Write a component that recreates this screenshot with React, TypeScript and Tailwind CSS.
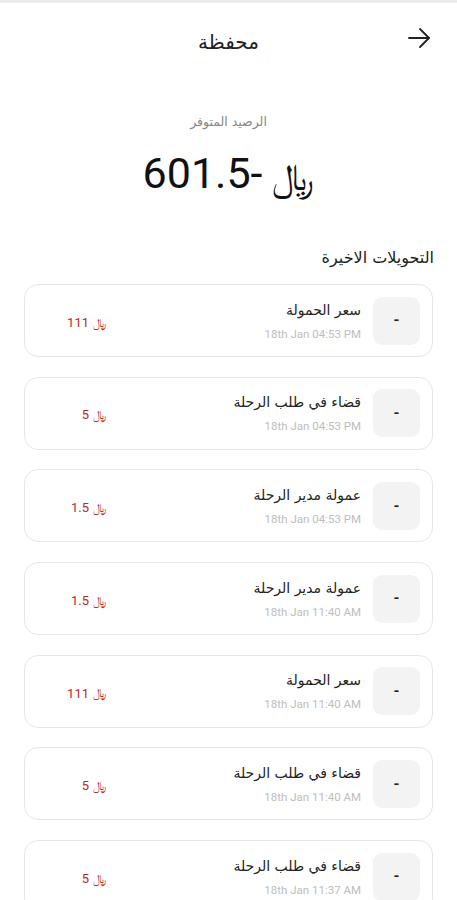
import React from "react";

const items = [
  { title: "سعر الحمولة", date: "18th Jan 04:53 PM", amount: "111" },
  { title: "قضاء في طلب الرحلة", date: "18th Jan 04:53 PM", amount: "5" },
  { title: "عمولة مدير الرحلة", date: "18th Jan 04:53 PM", amount: "1.5" },
  { title: "عمولة مدير الرحلة", date: "18th Jan 11:40 AM", amount: "1.5" },
  { title: "سعر الحمولة", date: "18th Jan 11:40 AM", amount: "111" },
  { title: "قضاء في طلب الرحلة", date: "18th Jan 11:40 AM", amount: "5" },
  { title: "قضاء في طلب الرحلة", date: "18th Jan 11:37 AM", amount: "5" },
];

const font = { fontFamily: '"DejaVu Sans", "Noto Sans", Roboto, sans-serif' };

export default function App() {
  return (
    <div dir="rtl" className="w-[457px] h-[900px] overflow-hidden bg-white" style={font}>
      <div className="h-[3px] bg-[#ececec]" />
      <div className="relative flex h-[78px] items-center justify-center">
        <div className="text-[20px] leading-[24px] text-[#222]">محفظة</div>
        <svg
          className="absolute right-[26px] top-[23px]"
          width="24"
          height="24"
          viewBox="0 0 24 24"
          fill="none"
          stroke="#222"
          strokeWidth="1.8"
          strokeLinecap="round"
          strokeLinejoin="round"
        >
          <path d="M2 12H22" />
          <path d="M13 3L22 12L13 21" />
        </svg>
      </div>
      <div className="mt-[33px] flex flex-col items-center">
        <div className="text-[12.5px] leading-[16px] text-[#888]">الرصيد المتوفر</div>
        <div dir="ltr" className="mt-[20px] flex items-center leading-none text-[#111]">
          <span className="text-[43px] font-['Roboto']">601.5-</span>
          <span className="ml-[10px] mt-[8px] text-[38px]">﷼</span>
        </div>
      </div>
      <div className="mt-[52px] pr-[23px] text-[16px] leading-[20px] text-[#222]">التحويلات الاخيرة</div>
      <div className="mt-[16px] flex flex-col gap-[19.7px] px-[24px]">
        {items.map((it, i) => (
          <div key={i} className="flex h-[73px] items-center rounded-[14px] border border-[#e6e6e6] bg-white pl-[11px] pr-[12px]">
            <div className="flex h-[48px] w-[47px] items-center justify-center rounded-[9px] bg-[#f3f3f3] text-[15px] font-bold text-[#222] font-['Roboto']">
              -
            </div>
            <div className="mr-[12px] flex flex-1 flex-col">
              <div className="text-[14px] leading-[18px] text-[#222]">{it.title}</div>
              <div dir="ltr" className="mt-[8px] text-right text-[11.5px] leading-[14px] text-[#bdbdbd] font-['Roboto']">{it.date}</div>
            </div>
            <div dir="ltr" className="mt-[4px] flex w-[70px] items-center justify-end text-[#b52a2a]">
              <span className="text-[13px] font-['Roboto']">{it.amount}</span>
              <span className="ml-[4px] text-[12px]">﷼</span>
            </div>
          </div>
        ))}
      </div>
    </div>
  );
}
